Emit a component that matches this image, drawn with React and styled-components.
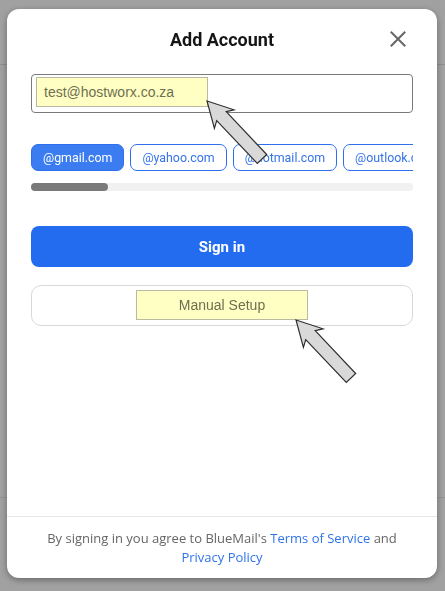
import React, { useState } from 'react';
import styled, { createGlobalStyle } from 'styled-components';

const GlobalStyle = createGlobalStyle`
  html, body {
    margin: 0;
    padding: 0;
    background: #a1a1a1;
    font-family: Roboto, "Liberation Sans", Arial, sans-serif;
  }
  * { box-sizing: border-box; }
`;

const domains = ['@gmail.com', '@yahoo.com', '@hotmail.com', '@outlook.com', '@icloud.com'];

export default function App() {
  const [email, setEmail] = useState('test@hostworx.co.za');
  const [domain, setDomain] = useState(0);

  return (
    <>
      <GlobalStyle />
      <Shell>
        <ShellHeader />
        <ShellMain />
        <ShellFooter />
      </Shell>

      <Overlay>
        <Modal>
          <Header>
            <Title>Add Account</Title>
            <CloseButton aria-label="Close">
              <svg width="16" height="16" viewBox="0 0 16 16">
                <path d="M1.5 1.5 L14.5 14.5 M14.5 1.5 L1.5 14.5" stroke="#666" strokeWidth="2" strokeLinecap="square" />
              </svg>
            </CloseButton>
          </Header>

          <Body>
            <EmailField>
              <Highlight>{email}</Highlight>
            </EmailField>

            <ChipScroller>
              <ChipRow>
                {domains.map((d, i) => (
                  <Chip key={d} active={i === domain} onClick={() => setDomain(i)}>
                    {d}
                  </Chip>
                ))}
              </ChipRow>
            </ChipScroller>
            <ScrollTrack>
              <ScrollThumb />
            </ScrollTrack>

            <SignInButton onClick={() => setEmail(email)}>Sign in</SignInButton>

            <ManualButton>
              <Highlight wide>Manual Setup</Highlight>
            </ManualButton>
          </Body>

          <Footer>
            By signing in you agree to BlueMail's <Link>Terms of Service</Link> and{' '}
            <Link>Privacy Policy</Link>
          </Footer>

          <Pointer left={196} top={88} />
          <Pointer left={285} top={307} />
        </Modal>
      </Overlay>
    </>
  );
}

// callout arrow, tip sits at (4,4) of the drawing
function Pointer({ left, top }) {
  return (
    <PointerBox left={left} top={top}>
      <svg width="70" height="72" viewBox="0 0 70 72">
        <polygon
          points="4,4 31,12.8 23.2,14.7 63.7,57.5 54.3,66.5 13.7,23.7 11.4,31.4"
          fill="#d9d9d9"
          stroke="#2e2e2e"
          strokeWidth="1.2"
          strokeLinejoin="miter"
        />
      </svg>
    </PointerBox>
  );
}

const Shell = styled.div`
  height: 591px;
  display: flex;
  flex-direction: column;
`;

const ShellHeader = styled.div`
  height: 65px;
  border-bottom: 1px solid #8e8e8e;
`;

const ShellMain = styled.div`
  height: 432px;
`;

const ShellFooter = styled.div`
  flex: 1;
  border-top: 1px solid #939393;
`;

const Overlay = styled.div`
  position: fixed;
  inset: 0;
  display: flex;
  justify-content: flex-start;
  align-items: flex-start;
  padding: 9px 0 0 7px;
`;

const Modal = styled.div`
  position: relative;
  width: 430px;
  height: 569px;
  background: #fff;
  border-radius: 12px;
  box-shadow: 0 2px 6px rgba(0, 0, 0, 0.35);
  display: flex;
  flex-direction: column;
`;

const Header = styled.div`
  position: relative;
  height: 60px;
  display: flex;
  align-items: center;
  justify-content: center;
`;

const Title = styled.h2`
  margin: 0;
  font-family: Roboto, "Liberation Sans", sans-serif;
  font-size: 18px;
  font-weight: 700;
  color: #151515;
`;

const CloseButton = styled.button`
  position: absolute;
  right: 31px;
  top: 22px;
  width: 16px;
  height: 16px;
  padding: 0;
  border: none;
  background: none;
  display: flex;
`;

const Body = styled.div`
  padding: 5px 24px 0;
  display: flex;
  flex-direction: column;
`;

const EmailField = styled.div`
  height: 39px;
  border: 1px solid #7a7a7a;
  border-radius: 4px;
  padding: 2px 4px;
  display: flex;
  align-items: flex-start;
`;

const Highlight = styled.span`
  width: 172px;
  height: 30px;
  background: #ffffc4;
  border: 1px solid #b9b9a4;
  padding-left: ${p => (p.wide ? '0' : '7px')};
  display: flex;
  align-items: center;
  justify-content: ${p => (p.wide ? 'center' : 'flex-start')};
  font-family: "Liberation Sans", Arial, sans-serif;
  font-size: 14px;
  color: #6f6f52;
`;

const ChipScroller = styled.div`
  margin-top: 31px;
  overflow: hidden;
`;

const ChipRow = styled.div`
  display: flex;
  gap: 6px;
`;

const Chip = styled.button`
  flex: none;
  height: 27px;
  padding: 0 11px;
  border-radius: 7px;
  border: 1px solid #2e6ff0;
  background: ${p => (p.active ? '#3b7df0' : '#fff')};
  color: ${p => (p.active ? '#fff' : '#3574ea')};
  font-family: Roboto, "Liberation Sans", sans-serif;
  font-size: 12.4px;
  cursor: pointer;
`;

const ScrollTrack = styled.div`
  margin-top: 12px;
  height: 8px;
  border-radius: 4px;
  background: #f1f1f1;
`;

const ScrollThumb = styled.div`
  width: 77px;
  height: 100%;
  border-radius: 4px;
  background: #7a7a7a;
`;

const SignInButton = styled.button`
  margin-top: 35px;
  height: 41px;
  border: none;
  border-radius: 8px;
  background: #236cf0;
  color: #fff;
  font-family: Roboto, "Liberation Sans", sans-serif;
  font-size: 15px;
  font-weight: 700;
`;

const ManualButton = styled.div`
  margin-top: 18px;
  height: 41px;
  border: 1px solid #d8d8d8;
  border-radius: 10px;
  display: flex;
  justify-content: center;
  padding-top: 4px;
`;

const Footer = styled.div`
  margin-top: auto;
  height: 62px;
  border-top: 1px solid #e6e6e6;
  padding: 12px 30px 0;
  text-align: center;
  font-family: "Open Sans", "Noto Sans", sans-serif;
  font-size: 13px;
  line-height: 19px;
  color: #666;
`;

const Link = styled.a`
  color: #2f74eb;
  cursor: pointer;
`;

const PointerBox = styled.div`
  position: absolute;
  left: ${p => p.left}px;
  top: ${p => p.top}px;
  width: 70px;
  height: 72px;
  z-index: 2;
  pointer-events: none;
  svg { display: block; }
`;
